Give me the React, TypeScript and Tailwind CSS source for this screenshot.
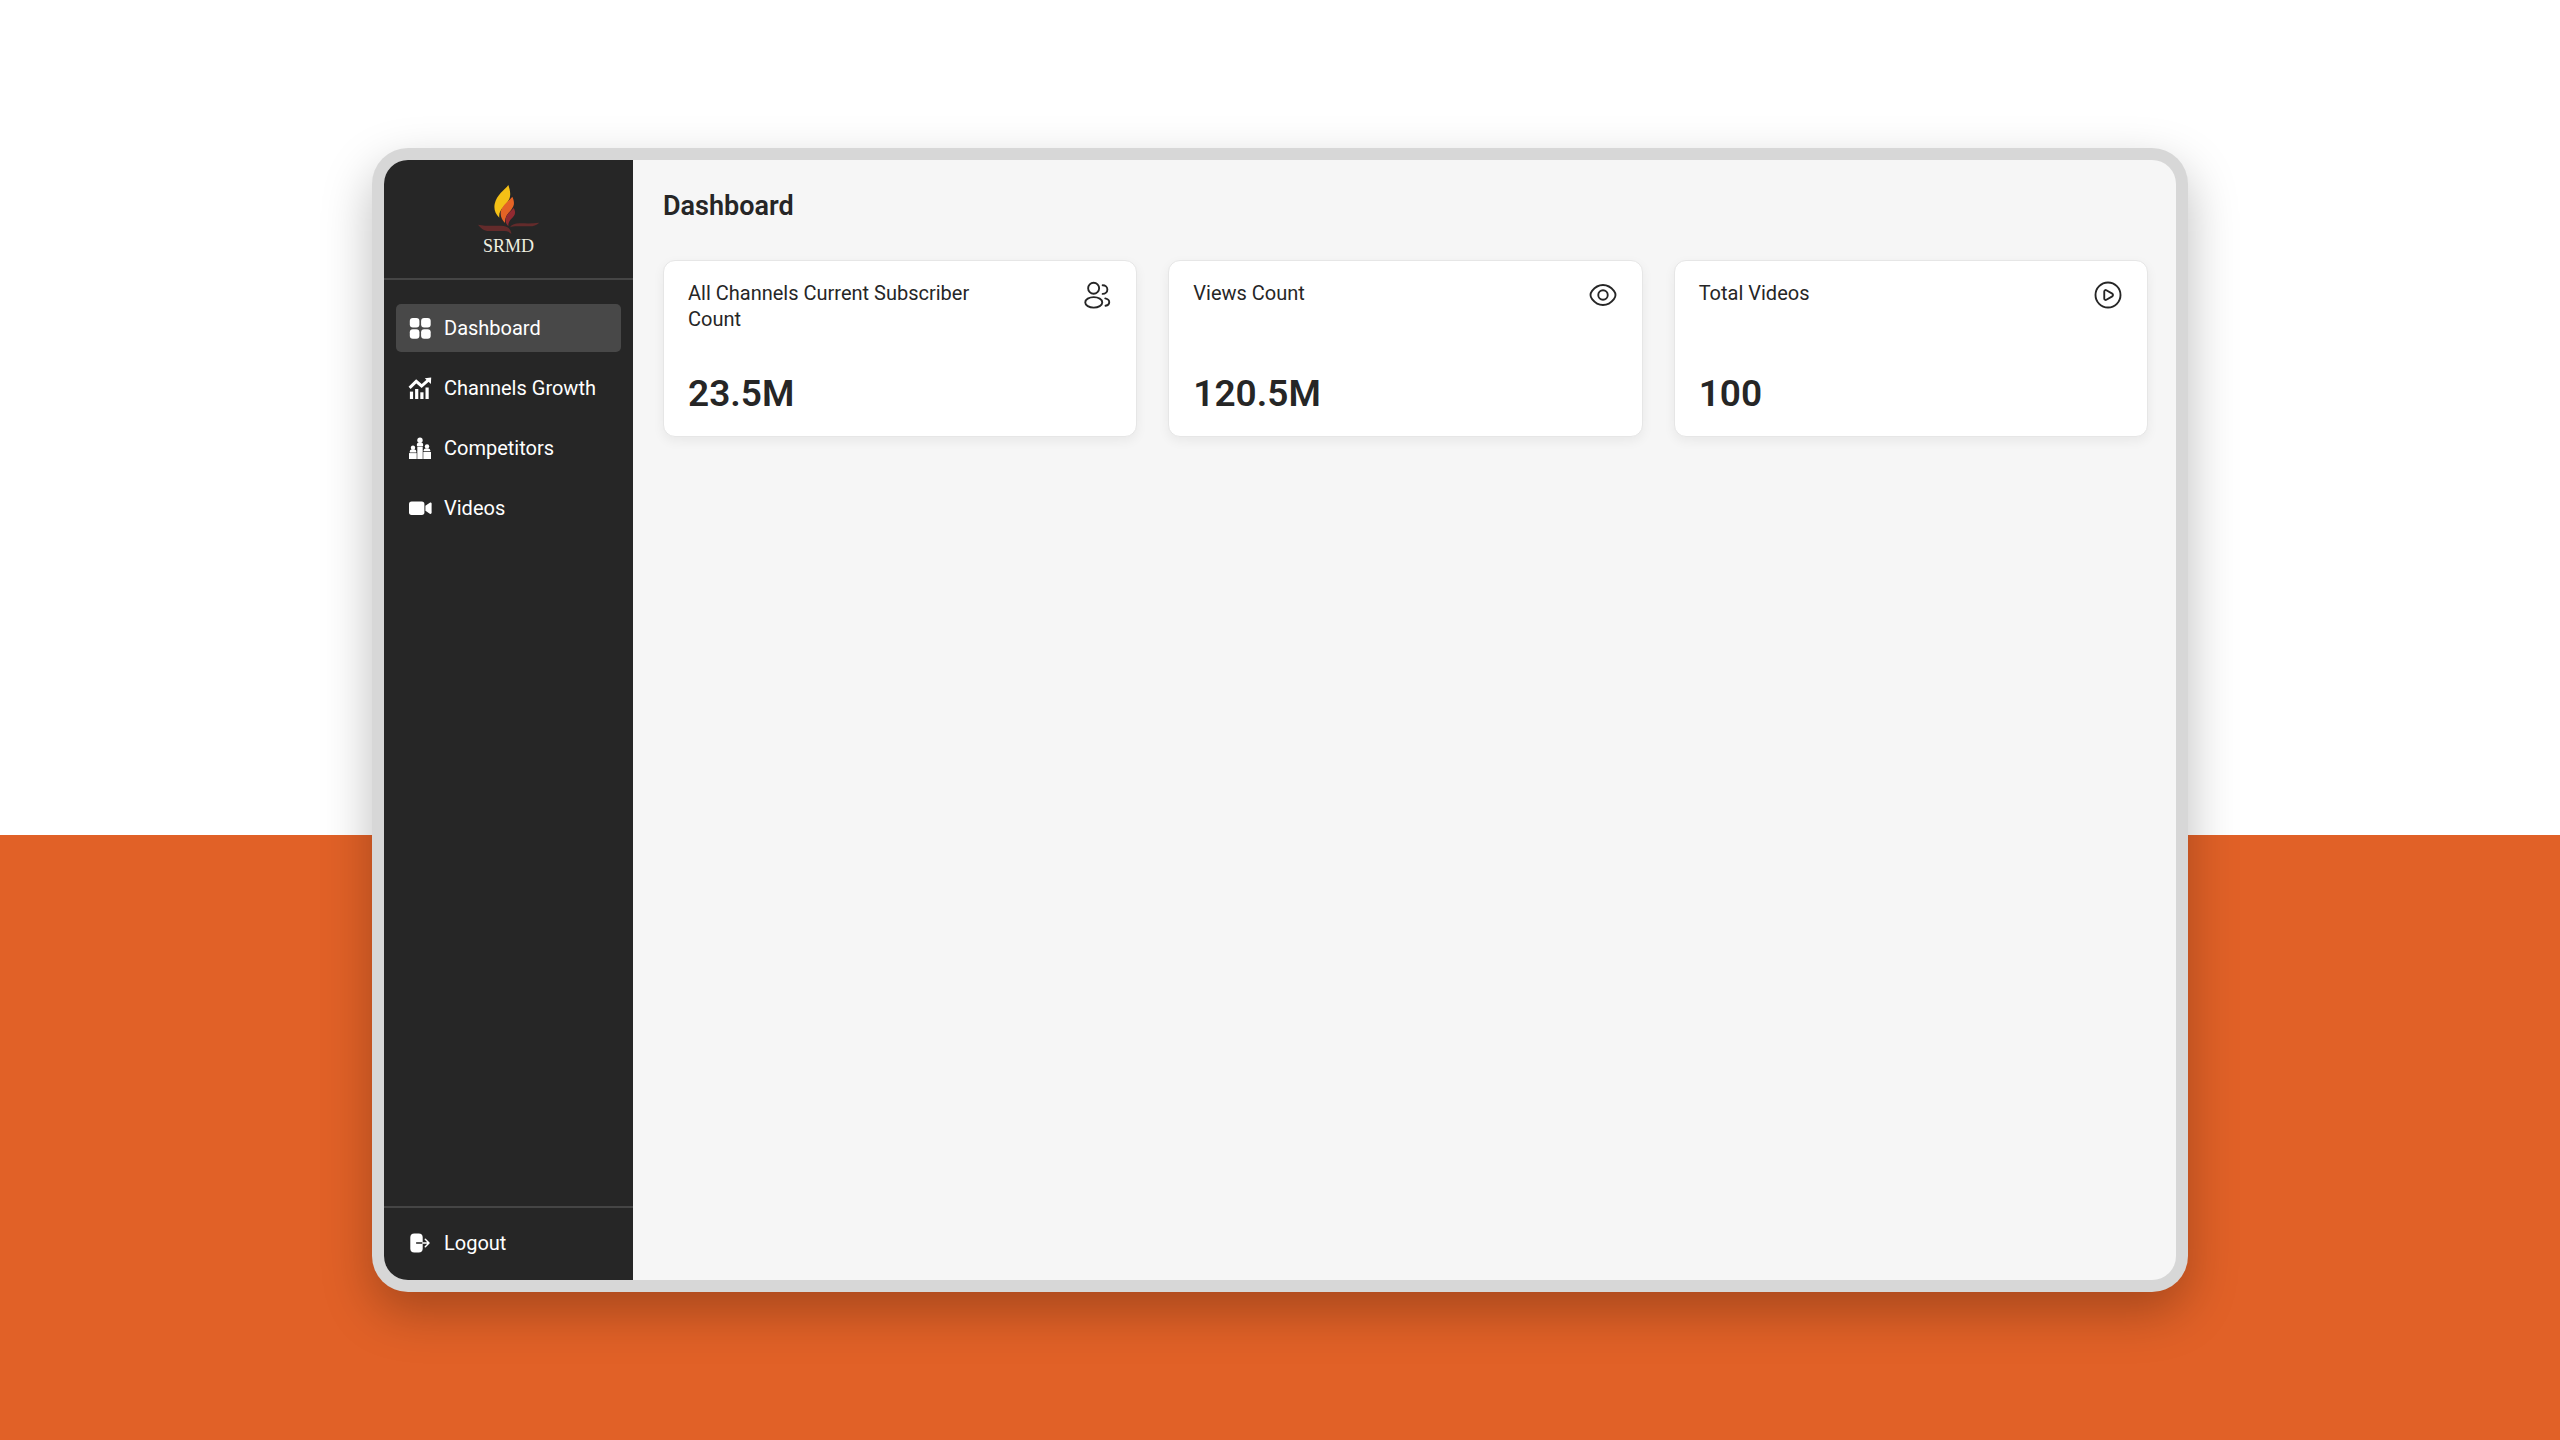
import type { ReactNode } from "react";

function GridIcon() {
  return (
    <svg viewBox="0 0 24 24" className="size-6 shrink-0" fill="currentColor" aria-hidden="true">
      <rect x="1.8" y="2" width="9.6" height="9.4" rx="3" />
      <rect x="13.1" y="2" width="9.6" height="9.4" rx="3" />
      <rect x="1.8" y="13.2" width="9.6" height="9.6" rx="3" />
      <rect x="13.1" y="13.2" width="9.6" height="9.6" rx="3" />
    </svg>
  );
}

function GrowthIcon() {
  return (
    <svg viewBox="0 0 24 24" className="size-6 shrink-0" fill="currentColor" aria-hidden="true">
      <rect x="1.9" y="15.6" width="3.2" height="7.4" />
      <rect x="7.1" y="13" width="3.2" height="10" />
      <rect x="12.3" y="16.3" width="3.2" height="6.7" />
      <rect x="17.5" y="11.5" width="3.2" height="11.5" />
      <path d="M1.6 11.8 8.2 5.4l5.4 4.6 7-6.2" fill="none" stroke="currentColor" strokeWidth="3" />
      <path d="M16.800 2.2 23.200 1.6l-.3 6.400z" />
    </svg>
  );
}

function PodiumIcon() {
  return (
    <svg viewBox="0 0 24 24" className="size-6 shrink-0" fill="currentColor" aria-hidden="true">
      <circle cx="12" cy="4.2" r="2.7" />
      <path d="M8.900 9.900V8.600c0-1.200.9-2 2-2h2.200c1.100 0 2 .8 2 2v1.300z" />
      <rect x="9.300" y="10.500" width="5.400" height="12.500" />
      <circle cx="5" cy="11.800" r="2.200" />
      <path d="M1.800 16.400v-.9c0-1.100.8-1.900 1.900-1.900h2.700c1.100 0 1.900.8 1.900 1.900v.9z" />
      <rect x="1" y="17.100" width="7.700" height="5.900" />
      <circle cx="19" cy="10.500" r="2.200" />
      <path d="M15.700 15.200v-.9c0-1.100.8-1.900 1.900-1.900h2.700c1.100 0 1.900.8 1.900 1.900v.9z" />
      <rect x="15.300" y="16" width="7.700" height="7" />
    </svg>
  );
}

function VideoIcon() {
  return (
    <svg viewBox="0 0 24 24" className="size-6 shrink-0" fill="currentColor" aria-hidden="true">
      <rect x="1" y="5.5" width="15.4" height="13.4" rx="2.6" />
      <path d="M17.400 9.700 21.800 6.700c.8-.5 1.800 0 1.800.9v9.200c0 .9-1 1.400-1.800.9l-4.400-3z" />
    </svg>
  );
}

function LogoutIcon() {
  return (
    <svg viewBox="0 0 24 24" className="size-6 shrink-0" fill="none" aria-hidden="true">
      <rect x="2.3" y="2.4" width="12.400" height="19" rx="4" fill="currentColor" />
      <path d="M8.600 12h6.100" stroke="#262626" strokeWidth="1.500" strokeLinecap="round" />
      <path d="M14.700 12h6M17.300 8.300l3.700 3.700-3.700 3.700" stroke="currentColor" strokeWidth="1.500" strokeLinecap="round" strokeLinejoin="round" />
    </svg>
  );
}

function UsersIcon() {
  return (
    <svg viewBox="0 0 24 24" className="size-[30px] shrink-0" fill="none" stroke="currentColor" strokeWidth="1.500" strokeLinecap="round" aria-hidden="true">
      <circle cx="9.300" cy="6.600" r="4.400" />
      <ellipse cx="9.400" cy="17.900" rx="6.800" ry="4.200" />
      <path d="M16.500 4.200c2.200 0 3.800 1.400 3.800 3.400s-1.600 3.500-3.800 3.500" />
      <path d="M18.600 14.700c1.900.4 3.200 1.500 3.200 3s-1.200 2.500-3 2.900" />
    </svg>
  );
}

function EyeIcon() {
  return (
    <svg viewBox="0 0 24 24" className="size-[30px] shrink-0" fill="none" stroke="currentColor" strokeWidth="1.500" aria-hidden="true">
      <path d="M3.275 15.296C2.425 14.192 2 13.639 2 12c0-1.640.425-2.191 1.275-3.296C4.972 6.500 7.818 4 12 4s7.028 2.500 8.725 4.704C21.575 9.810 22 10.361 22 12c0 1.640-.425 2.191-1.275 3.296C19.028 17.500 16.182 20 12 20s-7.028-2.500-8.725-4.704Z" />
      <circle cx="12" cy="12" r="3.800" />
    </svg>
  );
}

function PlayIcon() {
  return (
    <svg viewBox="0 0 24 24" className="size-[30px] shrink-0" fill="none" stroke="currentColor" strokeWidth="1.500" aria-hidden="true">
      <circle cx="12" cy="12" r="10" />
      <path d="M15.414 10.941c.781.462.781 1.656 0 2.118l-4.720 2.787C9.934 16.294 9 15.710 9 14.786V9.214c0-.924.934-1.507 1.694-1.059z" />
    </svg>
  );
}

function Logo() {
  return (
    <div className="flex flex-col items-center">
      <svg viewBox="353 165 183 147" className="h-[49px] w-[61px]" aria-hidden="true">
        <path d="M444 165C433 181 409 193 403 222C400 238 405 251 417 263C413 236 440 228 448 204C452 190 448 177 444 165Z" fill="#f4c016" />
        <path d="M456 200C445 214 424 226 421 247C420 261 426 271 434 279C433 253 452 246 459 229C463 219 460 209 456 200Z" fill="#e46325" />
        <path d="M460 234C452 244 437 253 436 267C435 276 438 283 444 289C443 271 455 268 462 256C466 248 464 241 460 234Z" fill="#912a31" />
        <path d="M353 284C380 290 412 286 430 288C444 290 453 300 453 312C446 304 439 303 426 303H386C370 303 362 295 353 284Z" fill="#632b2b" />
        <path d="M449 292C455 283 464 280 478 280C500 280 519 281 537 278C529 286 520 289 508 289H470C461 289 455 290 449 292Z" fill="#632b2b" />
      </svg>
      <span className="font-[Liberation_Serif,serif] text-[18px] leading-6 text-[#f0f0e2]">SRMD</span>
    </div>
  );
}

function NavItem({ icon, label, active = false }: { icon: ReactNode; label: string; active?: boolean }) {
  return (
    <a
      href="#"
      aria-current={active ? "page" : undefined}
      className={
        active
          ? "flex h-12 items-center gap-3 rounded-[5px] bg-[#484848] px-3"
          : "flex h-12 items-center gap-3 rounded-[5px] px-3"
      }
    >
      {icon}
      <span>{label}</span>
    </a>
  );
}

function StatCard({ label, value, icon }: { label: string; value: string; icon: ReactNode }) {
  return (
    <section className="flex min-h-[177px] flex-col justify-between rounded-xl border border-[#e6e6e6] bg-white px-6 pt-[19px] pb-[22px] shadow-[0_4px_12px_rgba(0,0,0,0.06)]">
      <div className="flex items-start justify-between">
        <h2 className="w-3/4 text-[20px] leading-[26px]">{label}</h2>
        {icon}
      </div>
      <p className="text-[37px] leading-10 font-semibold">{value}</p>
    </section>
  );
}

export default function App() {
  return (
    <div className="flex min-h-screen bg-[linear-gradient(to_bottom,#ffffff_58%,#e16127_58%)] px-[372px] py-[148px] font-[Roboto,sans-serif] text-[#262626]">
      <div className="flex flex-1 rounded-[36px] bg-[#d7d7d7] p-3 shadow-[0_20px_50px_rgba(0,0,0,0.26)]">
        <div className="flex flex-1 overflow-hidden rounded-3xl bg-[#f6f6f6]">
          <aside className="flex w-[249px] shrink-0 flex-col bg-[#262626] text-[20px] leading-6 text-white">
            <div className="border-b-2 border-[#454545] pt-[25px] pb-5">
              <Logo />
            </div>
            <nav className="flex flex-1 flex-col gap-3 px-3 pt-6">
              <NavItem icon={<GridIcon />} label="Dashboard" active />
              <NavItem icon={<GrowthIcon />} label="Channels Growth" />
              <NavItem icon={<PodiumIcon />} label="Competitors" />
              <NavItem icon={<VideoIcon />} label="Videos" />
            </nav>
            <div className="border-t-2 border-[#454545] px-3 pt-[11px] pb-[13px]">
              <button type="button" className="flex h-12 w-full items-center gap-3 px-3">
                <LogoutIcon />
                <span>Logout</span>
              </button>
            </div>
          </aside>
          <main className="flex-1 pt-7 pr-7 pl-[30px]">
            <h1 className="text-[27px] leading-9 font-semibold">Dashboard</h1>
            <div className="mt-9 grid grid-cols-3 gap-[31px]">
              <StatCard label="All Channels Current Subscriber Count" value="23.5M" icon={<UsersIcon />} />
              <StatCard label="Views Count" value="120.5M" icon={<EyeIcon />} />
              <StatCard label="Total Videos" value="100" icon={<PlayIcon />} />
            </div>
          </main>
        </div>
      </div>
    </div>
  );
}
